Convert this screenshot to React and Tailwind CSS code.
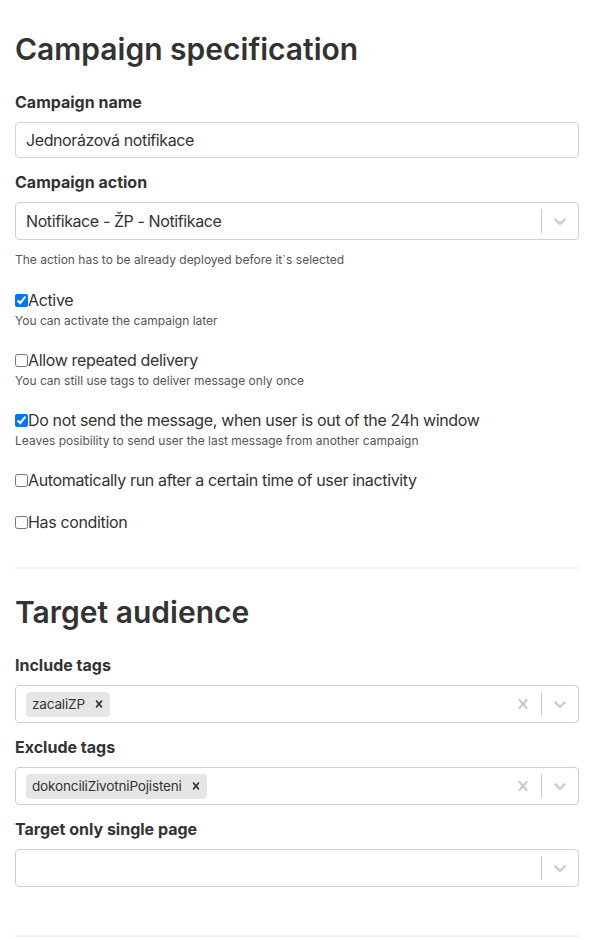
import React from "react";

const font = { fontFamily: "Inter, 'Noto Sans', sans-serif" };

function Chevron() {
  return (
    <svg viewBox="0 0 20 20" className="w-5 h-5 fill-[#cccccc]">
      <path d="M4.516 7.548c0.436-0.446 1.043-0.481 1.576 0l3.908 3.747 3.908-3.747c0.533-0.481 1.141-0.446 1.574 0 0.436 0.445 0.408 1.197 0 1.615-0.406 0.418-4.695 4.502-4.695 4.502-0.217 0.223-0.502 0.335-0.787 0.335s-0.57-0.112-0.789-0.335c0 0-4.287-4.084-4.695-4.502s-0.436-1.17 0-1.615z" />
    </svg>
  );
}

function Cross({ className }) {
  return (
    <svg viewBox="0 0 20 20" className={className}>
      <path d="M14.348 14.849c-0.469 0.469-1.229 0.469-1.697 0l-2.651-3.030-2.651 3.029c-0.469 0.469-1.229 0.469-1.697 0-0.469-0.469-0.469-1.229 0-1.697l2.758-3.15-2.759-3.152c-0.469-0.469-0.469-1.228 0-1.697s1.228-0.469 1.697 0l2.652 3.031 2.651-3.031c0.469-0.469 1.228-0.469 1.697 0s0.469 1.229 0 1.697l-2.758 3.152 2.758 3.15c0.469 0.469 0.469 1.229 0 1.698z" />
    </svg>
  );
}

function Select({ value, tags, clearable }) {
  return (
    <div className="flex items-center h-[38px] border border-[#d0d0d0] rounded bg-white">
      <div className="flex-1 flex items-center px-[8px] min-w-0">
        {value && <span className="px-[2px] text-[16px] tracking-[-0.4px] text-[#333]">{value}</span>}
        {tags &&
          tags.map((t) => (
            <span key={t} className="flex items-center h-[25px] m-[2px] bg-[#e6e6e6] rounded-sm">
              <span className="pl-[6px] pr-[3px] text-[13.6px] tracking-[-0.2px] text-[#333]">{t}</span>
              <span className="px-[4px] flex items-center">
                <Cross className="w-[14px] h-[14px] fill-[#333]" />
              </span>
            </span>
          ))}
      </div>
      {clearable && (
        <div className="px-2 flex items-center">
          <Cross className="w-5 h-5 fill-[#cccccc]" />
        </div>
      )}
      <span className="w-px h-6 bg-[#cccccc]" />
      <div className="px-2 flex items-center">
        <Chevron />
      </div>
    </div>
  );
}

function Check({ label, help, checked, className = "" }) {
  return (
    <div className={className}>
      <label className="flex items-center text-[16px] leading-6 tracking-[-0.35px] text-[#333]">
        <input type="checkbox" defaultChecked={checked} className="m-0 w-[13px] h-[13px]" />
        <span>{label}</span>
      </label>
      {help && <p className="text-[12px] leading-[18px] text-[#555]">{help}</p>}
    </div>
  );
}

export default function App() {
  return (
    <main className="min-h-screen bg-white text-[#333] pl-[15px] pr-[27px] pt-[31px]" style={font}>
      <h2 className="text-[30px] leading-9 font-semibold mb-[23px]">Campaign specification</h2>

      <label className="block font-bold leading-6 mb-2">Campaign name</label>
      <input
        className="w-full h-9 px-[10px] text-[16px] tracking-[-0.4px] text-[#333] border border-[#d6d6d6] rounded outline-none"
        defaultValue="Jednorázová notifikace"
      />

      <label className="block font-bold leading-6 mt-3 mb-2">Campaign action</label>
      <Select value="Notifikace - ŽP - Notifikace" />
      <p className="text-[12px] leading-[18px] text-[#555] mt-[11px]">
        The action has to be already deployed before it`s selected
      </p>

      <Check className="mt-[19px]" checked label="Active" help="You can activate the campaign later" />
      <Check
        className="mt-[18px]"
        label="Allow repeated delivery"
        help="You can still use tags to deliver message only once"
      />
      <Check
        className="mt-[18px]"
        checked
        label="Do not send the message, when user is out of the 24h window"
        help="Leaves posibility to send user the last message from another campaign"
      />
      <Check className="mt-[18px]" label="Automatically run after a certain time of user inactivity" />
      <Check className="mt-[18px]" label="Has condition" />

      <hr className="mt-[33px] border-0 h-[2px] bg-[#f0f0f0]" />

      <h2 className="text-[30px] leading-9 font-semibold mt-[25px] mb-[23px]">Target audience</h2>

      <label className="block font-bold leading-6 mb-2">Include tags</label>
      <Select tags={["zacaliZP"]} clearable />

      <label className="block font-bold leading-6 mt-3 mb-2">Exclude tags</label>
      <Select tags={["dokonciliZivotniPojisteni"]} clearable />

      <label className="block font-bold leading-6 mt-3 mb-2">Target only single page</label>
      <Select />

      <hr className="mt-[48px] border-0 h-[2px] bg-[#f0f0f0]" />
    </main>
  );
}
